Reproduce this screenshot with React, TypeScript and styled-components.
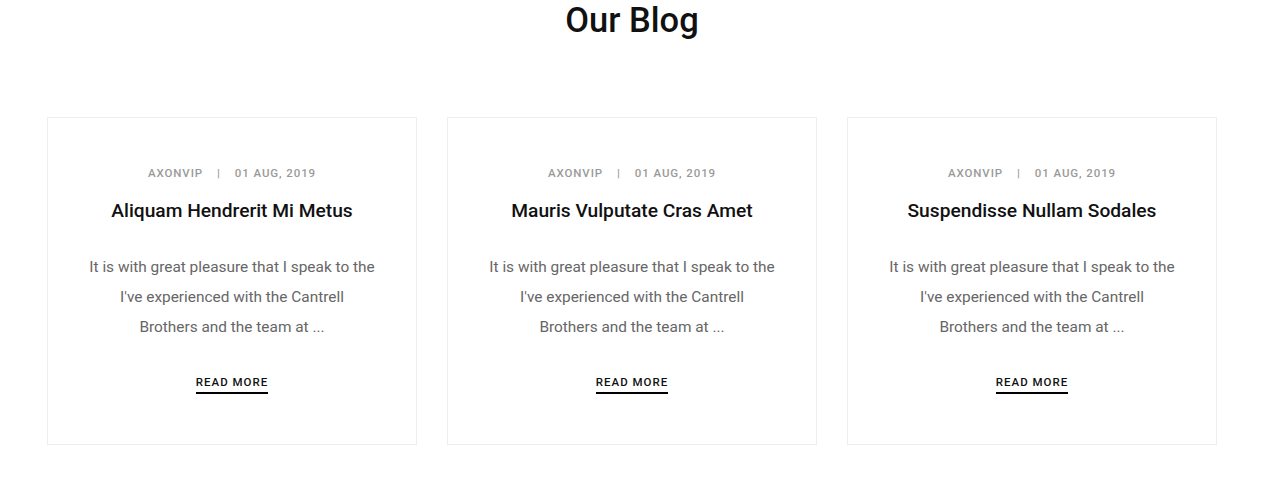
import React from "react";
import styled, { createGlobalStyle } from "styled-components";

const Global = createGlobalStyle`
  body {
    margin: 0;
    background: #fff;
    font-family: Roboto, "Liberation Sans", sans-serif;
  }
`;

const Section = styled.section`
  width: 1170px;
  margin: 0 0 0 47px;
  padding-bottom: 40px;
`;

const Heading = styled.h2`
  margin: 0;
  text-align: center;
  font-size: 34.5px;
  line-height: 40px;
  font-weight: 500;
  color: #111;
`;

const Grid = styled.div`
  display: grid;
  grid-template-columns: repeat(3, 1fr);
  gap: 30px;
  margin-top: 77px;
`;

const Card = styled.article`
  border: 1px solid #eee;
  padding: 45px 10px 50px;
  text-align: center;
  display: flex;
  flex-direction: column;
  align-items: center;
`;

const Meta = styled.div`
  font-size: 11.5px;
  line-height: 20px;
  font-weight: 500;
  letter-spacing: 0.9px;
  color: #9a9a9a;
  text-transform: uppercase;
`;

const Sep = styled.span`
  margin: 0 14px;
`;

const Title = styled.h3`
  margin: 13px 0 0;
  font-size: 19.2px;
  line-height: 30px;
  font-weight: 500;
  color: #111;
`;

const Body = styled.p`
  margin: 26px 0 0;
  font-size: 15.4px;
  line-height: 30px;
  color: #666;
`;

const ReadMore = styled.a`
  margin-top: 30px;
  font-size: 11.5px;
  line-height: 20px;
  font-weight: 500;
  letter-spacing: 1px;
  color: #111;
  text-decoration: none;
  border-bottom: 2px solid #000;
  text-transform: uppercase;
`;

const posts = [
  "Aliquam Hendrerit Mi Metus",
  "Mauris Vulputate Cras Amet",
  "Suspendisse Nullam Sodales",
];

export default function App() {
  return (
    <>
      <Global />
      <Section>
        <Heading>Our Blog</Heading>
        <Grid>
          {posts.map((t) => (
            <Card key={t}>
              <Meta>
                axonvip<Sep>|</Sep>01 Aug, 2019
              </Meta>
              <Title>{t}</Title>
              <Body>
                It is with great pleasure that I speak to the
                <br />
                I've experienced with the Cantrell
                <br />
                Brothers and the team at ...
              </Body>
              <ReadMore href="#">Read More</ReadMore>
            </Card>
          ))}
        </Grid>
      </Section>
    </>
  );
}
